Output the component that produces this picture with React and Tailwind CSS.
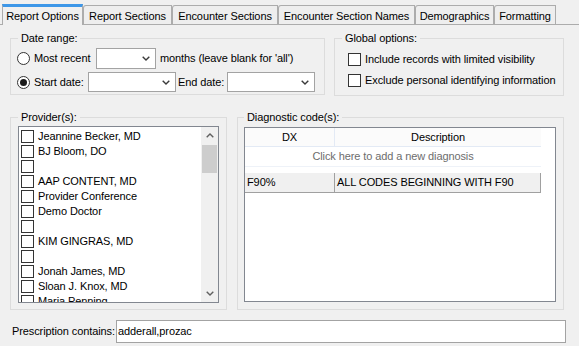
import React from "react";

const tabs = [
  { label: "Report Options", w: "w-[81px]", sel: true },
  { label: "Report Sections", w: "w-[89px]" },
  { label: "Encounter Sections", w: "w-[106px]" },
  { label: "Encounter Section Names", w: "w-[137px]" },
  { label: "Demographics", w: "w-[79px]" },
  { label: "Formatting", w: "w-[62px]" },
];

const providers = [
  "Jeannine Becker, MD",
  "BJ Bloom, DO",
  "",
  "AAP CONTENT, MD",
  "Provider Conference",
  "Demo Doctor",
  "",
  "KIM GINGRAS, MD",
  "",
  "Jonah James, MD",
  "Sloan J. Knox, MD",
  "Maria Penning",
];

function ChevronDown({ color = "#3a3a3a" }) {
  return (
    <svg width="8" height="5" viewBox="0 0 8 5" className="block">
      <path d="M0.7 0.7 L4 4 L7.3 0.7" fill="none" stroke={color} strokeWidth="1.4" />
    </svg>
  );
}

function ChevronUp({ color = "#606060" }) {
  return (
    <svg width="8" height="5" viewBox="0 0 8 5" className="block">
      <path d="M0.7 4.3 L4 1 L7.3 4.3" fill="none" stroke={color} strokeWidth="1.4" />
    </svg>
  );
}

function Combo({ w, h }) {
  return (
    <div className={`${w} ${h} bg-white border border-[#a3a3a3] flex items-center justify-end pr-[5px] shrink-0`}>
      <ChevronDown />
    </div>
  );
}

function Radio({ checked }) {
  return (
    <span className="w-[13px] h-[13px] rounded-full border border-[#333333] bg-white flex items-center justify-center shrink-0">
      {checked && <span className="w-[7px] h-[7px] rounded-full bg-[#1a1a1a]" />}
    </span>
  );
}

function Check() {
  return <span className="w-[13px] h-[13px] border border-[#333333] bg-white shrink-0 block" />;
}

export default function App() {
  return (
    <div className="w-[579px] h-[346px] bg-[#f0f0f0] overflow-hidden text-[11px] leading-[13px] tracking-[-0.1px] text-black font-['Liberation_Sans',Arial,sans-serif]">
      {/* Tabs */}
      <div className="flex h-[25px] items-end pl-[2px] border-b border-[#acacac]">
        {tabs.map((t) =>
          t.sel ? (
            <div
              key={t.label}
              className={`${t.w} h-[21px] -mb-px bg-[#f0f0f0] border-x border-[#acacac] border-t-[3px] border-t-[#3d97e8] flex items-center justify-center pt-[1px] shrink-0 whitespace-nowrap`}
            >
              {t.label}
            </div>
          ) : (
            <div
              key={t.label}
              className={`${t.w} h-[19px] bg-[#eeeeee] border-x border-t border-[#acacac] rounded-tl-[3px] flex items-center justify-center pt-[2px] shrink-0 whitespace-nowrap`}
            >
              {t.label}
            </div>
          )
        )}
      </div>

      {/* Row 1 */}
      <div className="flex items-start pl-[10px] mt-[7px]">
        <fieldset className="w-[315px] border border-[#dcdcdc] pl-[6px] pt-[3px] pb-[2px]">
          <legend className="ml-[1px] px-[3px] leading-[13px]">Date range:</legend>
          <div className="flex items-center h-[21px]">
            <Radio />
            <span className="ml-[4px] w-[62px] whitespace-nowrap">Most recent</span>
            <Combo w="w-[60px]" h="h-[21px]" />
            <span className="ml-[4px] whitespace-nowrap">months (leave blank for 'all')</span>
          </div>
          <div className="flex items-center h-[20px] mt-[3px]">
            <Radio checked />
            <span className="ml-[4px] w-[54px] whitespace-nowrap">Start date:</span>
            <Combo w="w-[88px]" h="h-[20px]" />
            <span className="ml-[2px] w-[49px] whitespace-nowrap">End date:</span>
            <Combo w="w-[88px]" h="h-[20px]" />
          </div>
        </fieldset>

        <fieldset className="ml-[9px] w-[230px] border border-[#dcdcdc] pl-[7px] pt-[7px] pb-[7px]">
          <legend className="px-[3px] leading-[13px]">Global options:</legend>
          <div className="flex items-center h-[15px] ml-[6px]">
            <Check />
            <span className="ml-[4px] whitespace-nowrap">Include records with limited visibility</span>
          </div>
          <div className="flex items-center h-[15px] ml-[6px] mt-[6px]">
            <Check />
            <span className="ml-[4px] whitespace-nowrap">Exclude personal identifying information</span>
          </div>
        </fieldset>
      </div>

      {/* Row 2 */}
      <div className="flex items-start pl-[10px] mt-[15px]">
        <fieldset className="w-[217px] border border-[#dcdcdc] pl-[7px] pt-[2px] pb-[6px]">
          <legend className="px-[3px] leading-[13px]">Provider(s):</legend>
          <div className="w-[201px] h-[177px] border border-[#828790] bg-white flex overflow-hidden">
            <div className="flex-1 pt-[2px] pl-[2px] overflow-hidden">
              {providers.map((p, i) => (
                <div key={i} className="h-[15px] flex items-center">
                  <Check />
                  <span className="ml-[4px] whitespace-nowrap">{p}</span>
                </div>
              ))}
            </div>
            <div className="w-[17px] bg-[#f0f0f0] flex flex-col items-center shrink-0">
              <div className="h-[17px] w-full flex items-center justify-center">
                <ChevronUp />
              </div>
              <div className="mt-[1px] h-[28px] w-[15px] bg-[#cdcdcd]" />
              <div className="flex-1" />
              <div className="h-[17px] w-full flex items-center justify-center">
                <ChevronDown color="#606060" />
              </div>
            </div>
          </div>
        </fieldset>

        <fieldset className="ml-[10px] w-[327px] border border-[#dcdcdc] pl-[6px] pt-[3px] pb-[7px]">
          <legend className="px-[3px] leading-[13px]">Diagnostic code(s):</legend>
          <div className="w-[312px] h-[175px] border border-[#828790] bg-white">
            <div className="flex h-[19px] w-[296px] border-b border-[#e3eaf5] bg-[#fbfbfb]">
              <div className="w-[90px] border-r border-[#e3eaf5] flex items-center justify-center">DX</div>
              <div className="flex-1 flex items-center justify-center">Description</div>
            </div>
            <div className="h-[20px] w-[296px] border-b border-[#eef2f8] flex items-center justify-center text-[#6d6d6d]">
              Click here to add a new diagnosis
            </div>
            <div className="h-[6px]" />
            <div className="flex h-[20px] w-[296px] bg-[#f0f0f0] border-b border-r border-[#a0a0a0]">
              <div className="w-[90px] border-r border-[#a0a0a0] flex items-center pl-[2px]">F90%</div>
              <div className="flex-1 flex items-center pl-[2px] whitespace-nowrap">ALL CODES BEGINNING WITH F90</div>
            </div>
          </div>
        </fieldset>
      </div>

      {/* Prescription */}
      <div className="flex items-center pl-[12px] mt-[10px]">
        <span className="w-[104px] whitespace-nowrap">Prescription contains:</span>
        <div className="w-[450px] h-[23px] bg-white border border-[#a3a3a3] flex items-center pl-[1px]">
          adderall,prozac
        </div>
      </div>
    </div>
  );
}
